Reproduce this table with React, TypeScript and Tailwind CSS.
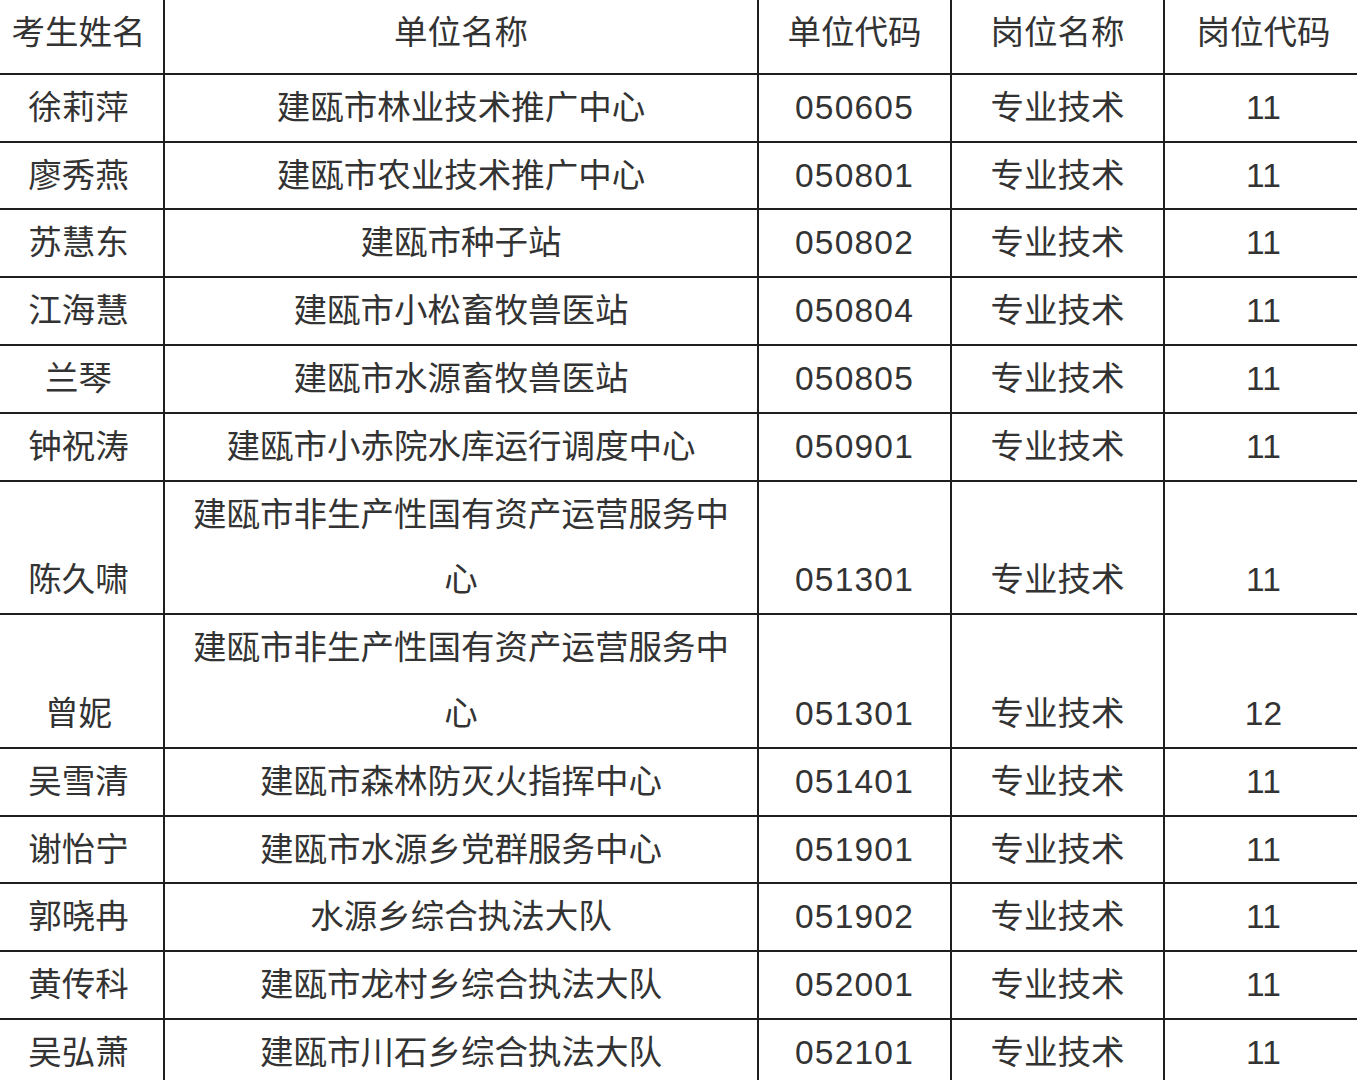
const rows: [string, string, string, string, string][] = [
  ['徐莉萍', '建瓯市林业技术推广中心', '050605', '专业技术', '11'],
  ['廖秀燕', '建瓯市农业技术推广中心', '050801', '专业技术', '11'],
  ['苏慧东', '建瓯市种子站', '050802', '专业技术', '11'],
  ['江海慧', '建瓯市小松畜牧兽医站', '050804', '专业技术', '11'],
  ['兰琴', '建瓯市水源畜牧兽医站', '050805', '专业技术', '11'],
  ['钟祝涛', '建瓯市小赤院水库运行调度中心', '050901', '专业技术', '11'],
  ['陈久啸', '建瓯市非生产性国有资产运营服务中心', '051301', '专业技术', '11'],
  ['曾妮', '建瓯市非生产性国有资产运营服务中心', '051301', '专业技术', '12'],
  ['吴雪清', '建瓯市森林防灭火指挥中心', '051401', '专业技术', '11'],
  ['谢怡宁', '建瓯市水源乡党群服务中心', '051901', '专业技术', '11'],
  ['郭晓冉', '水源乡综合执法大队', '051902', '专业技术', '11'],
  ['黄传科', '建瓯市龙村乡综合执法大队', '052001', '专业技术', '11'],
  ['吴弘萧', '建瓯市川石乡综合执法大队', '052101', '专业技术', '11'],
];

const headers = ['考生姓名', '单位名称', '单位代码', '岗位名称', '岗位代码'];

const cell =
  'border-2 border-[#1f1f1f] px-4 py-0 text-center align-bottom leading-[65.8px] font-normal';

export default function App() {
  return (
    <div
      className="w-[1357px] h-[1080px] overflow-hidden bg-white text-[#333333] text-[33.5px]"
      style={{ fontFamily: '"Liberation Sans", "Noto Sans CJK SC", sans-serif' }}
    >
      <table className="table-fixed border-collapse ml-[-8px] mt-[-2px] w-[1370px]">
        <colgroup>
          <col className="w-[171px]" />
          <col className="w-[594px]" />
          <col className="w-[193px]" />
          <col className="w-[213px]" />
          <col className="w-[199px]" />
        </colgroup>
        <thead>
          <tr>
            {headers.map((h) => (
              <th key={h} className={`${cell} pb-[7px]`}>
                {h}
              </th>
            ))}
          </tr>
        </thead>
        <tbody>
          {rows.map((r, i) => (
            <tr key={i}>
              {r.map((v, j) => (
                <td key={j} className={j === 2 ? `${cell} tracking-[1.2px]` : cell}>
                  {v}
                </td>
              ))}
            </tr>
          ))}
        </tbody>
      </table>
    </div>
  );
}
